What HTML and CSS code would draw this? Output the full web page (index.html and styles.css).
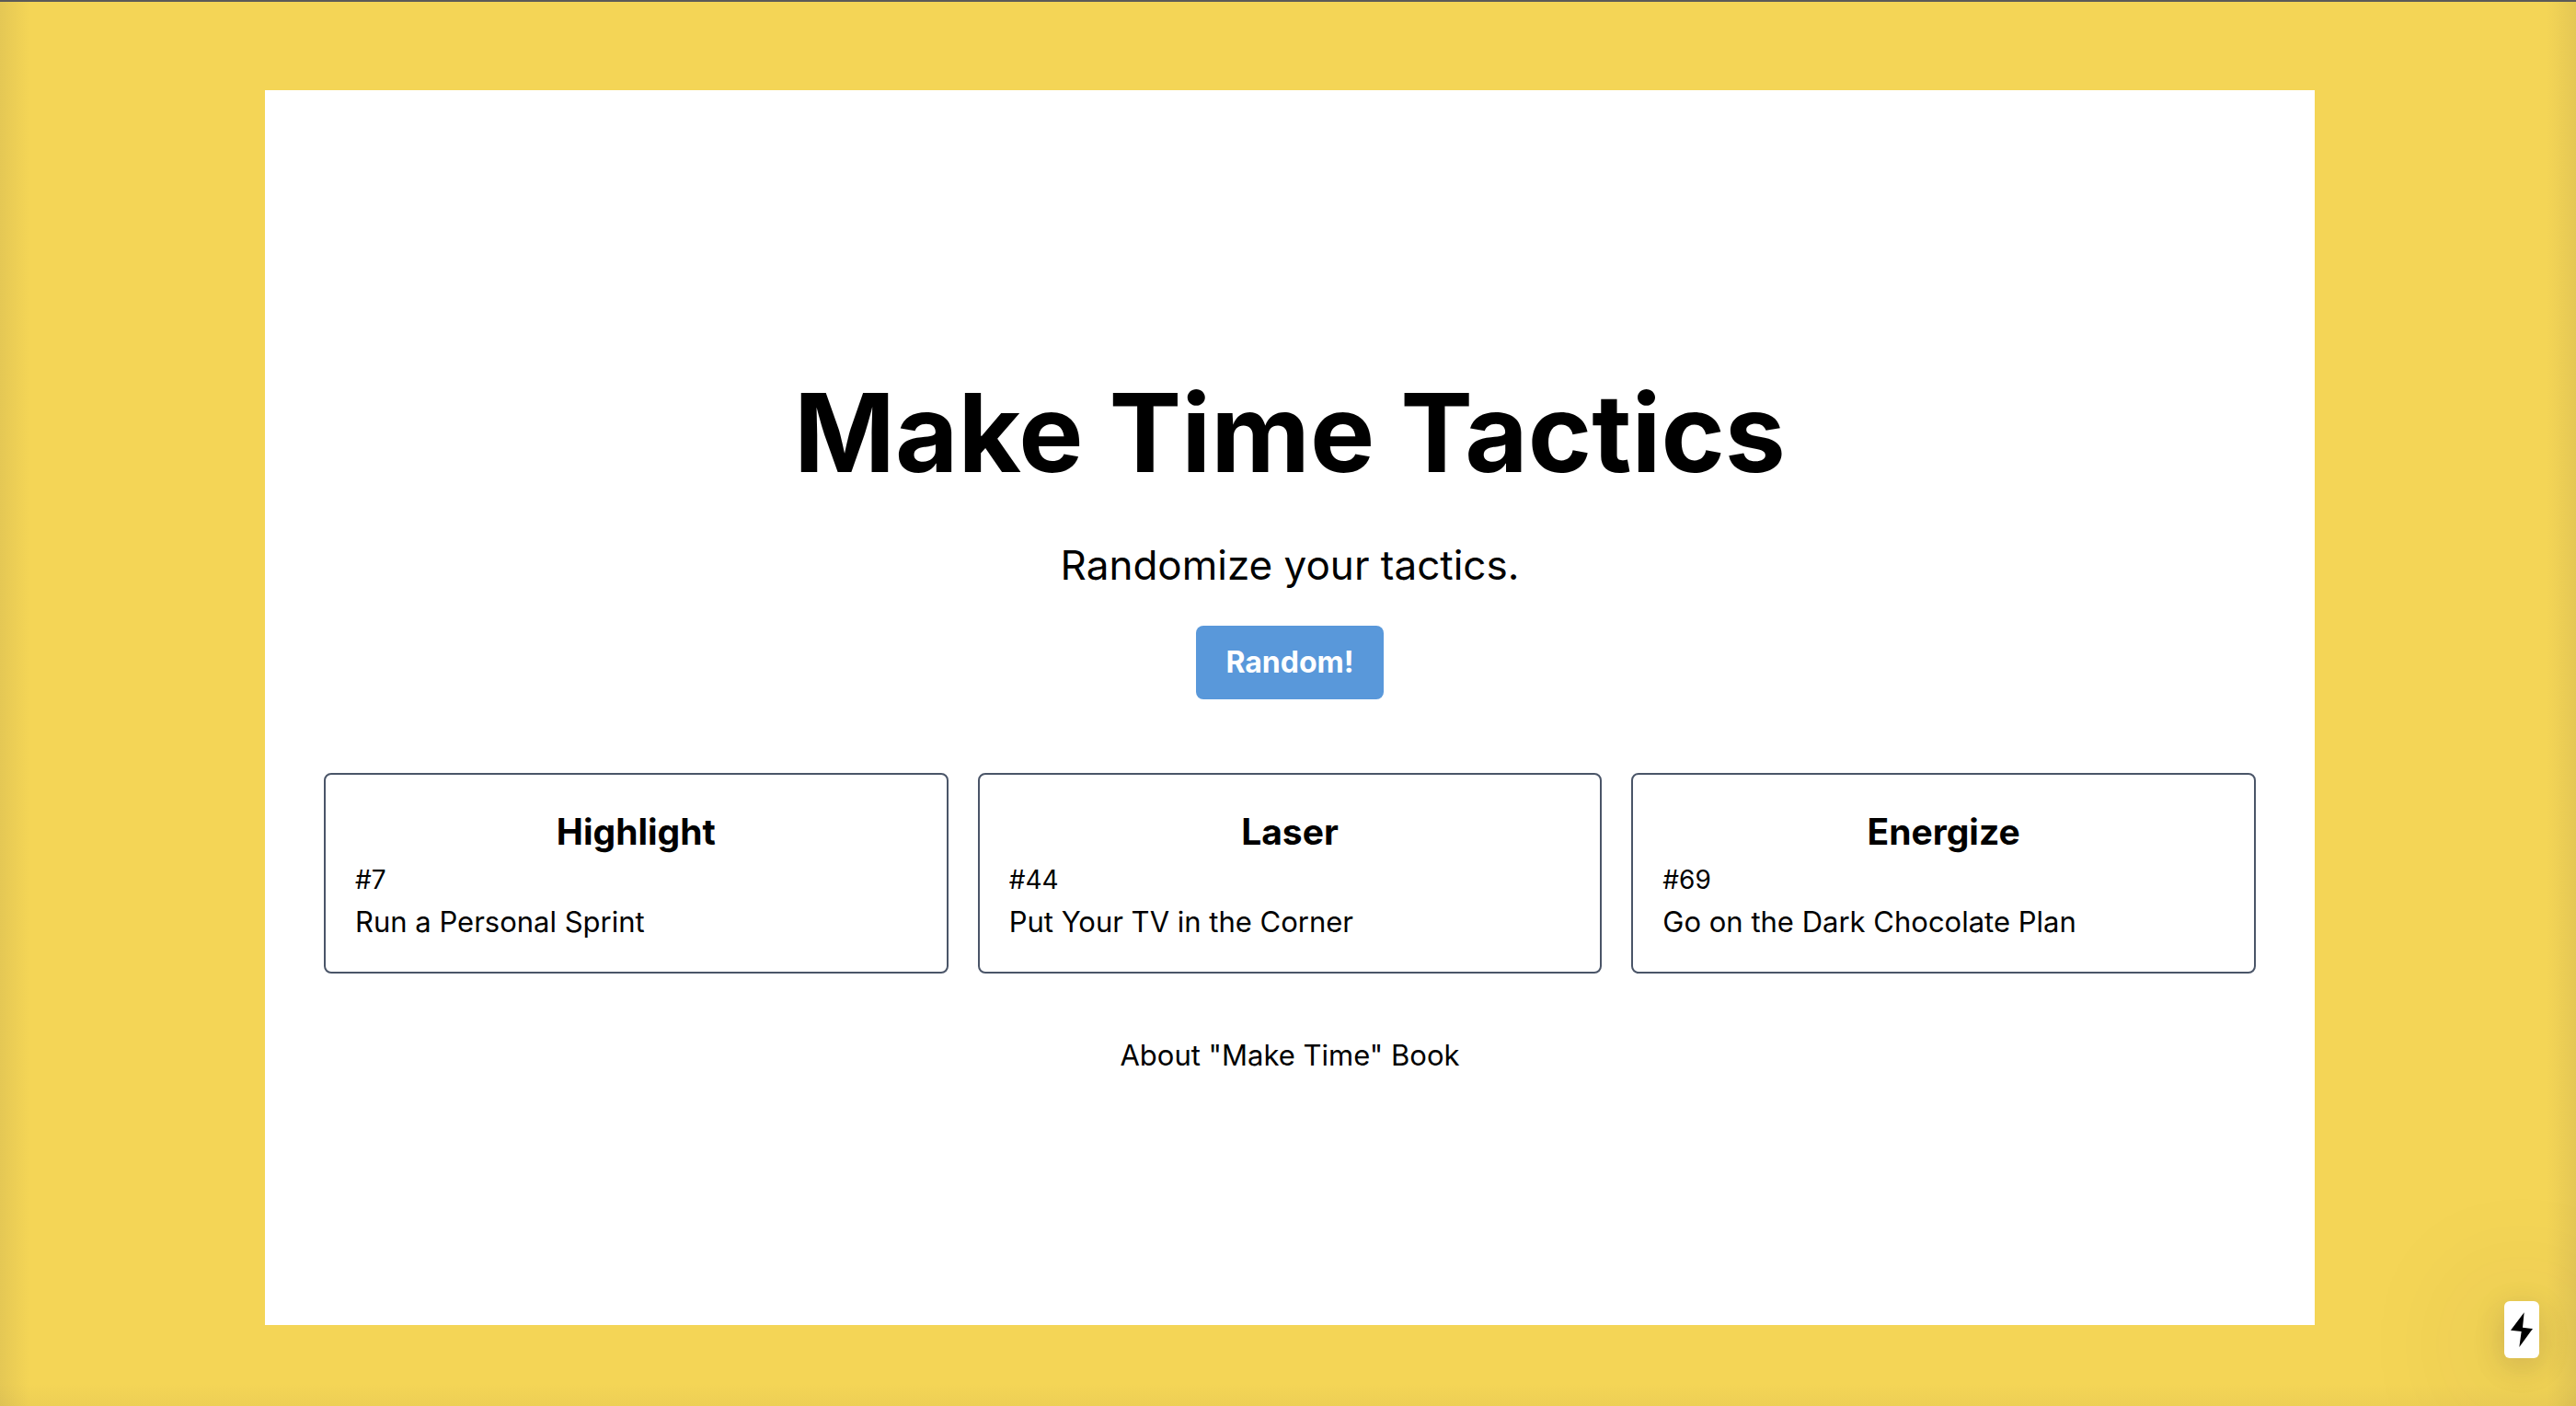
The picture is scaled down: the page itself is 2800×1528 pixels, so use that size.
FILE: index.html
```html
<!DOCTYPE html>
<html lang="en">
<head>
<meta charset="utf-8">
<meta name="viewport" content="width=device-width, initial-scale=1">
<title>Make Time Tactics</title>
<link rel="stylesheet" href="styles.css">
</head>
<body>
<div class="page">
  <main class="panel">
    <h1 class="title">Make Time Tactics</h1>
    <p class="subtitle">Randomize your tactics.</p>
    <button class="button" type="button">Random!</button>
    <div class="cards">
      <section class="card">
        <h2 class="card-heading">Highlight</h2>
        <p class="card-number">#7</p>
        <p class="card-tactic">Run a Personal Sprint</p>
      </section>
      <section class="card">
        <h2 class="card-heading">Laser</h2>
        <p class="card-number">#44</p>
        <p class="card-tactic">Put Your TV in the Corner</p>
      </section>
      <section class="card">
        <h2 class="card-heading">Energize</h2>
        <p class="card-number">#69</p>
        <p class="card-tactic">Go on the Dark Chocolate Plan</p>
      </section>
    </div>
    <a class="about" href="#about">About "Make Time" Book</a>
  </main>
</div>
<div class="indicator">
  <svg class="bolt" viewBox="0 0 72 114" aria-hidden="true"><path d="M44 1 0 59 35 63 28 114 72 54 39 50Z"/></svg>
</div>
</body>
</html>
```
FILE: styles.css
```css
*, *::before, *::after {
  box-sizing: border-box;
}

body {
  margin: 0;
  font-family: Inter, "Liberation Sans", sans-serif;
  font-size: 31px;
  line-height: 48px;
  color: #000;
}

h1, h2, p {
  margin: 0;
}

.page {
  display: flex;
  min-height: 100vh;
  padding: 96px 284px 88px 288px;
  border-top: 2px solid #5b5a58;
  background:
    linear-gradient(to right, rgba(70, 60, 70, 0.09), rgba(70, 60, 70, 0) 32px),
    linear-gradient(to left, rgba(70, 60, 70, 0.09), rgba(70, 60, 70, 0) 32px),
    linear-gradient(to top, rgba(70, 60, 70, 0.04), rgba(70, 60, 70, 0) 24px),
    #f4d556;
}

.panel {
  flex: 1;
  display: flex;
  flex-direction: column;
  align-items: center;
  justify-content: center;
  padding: 80px 64px 64px;
  background: #fff;
}

.title {
  font-size: 118px;
  line-height: 172px;
  font-weight: 700;
  text-align: center;
}

.subtitle {
  margin-top: 20px;
  font-size: 44px;
  line-height: 76px;
  text-align: center;
}

.button {
  margin-top: 28px;
  padding: 16px 32px;
  border: 0;
  border-radius: 8px;
  background: #5998da;
  color: #fff;
  font: inherit;
  font-size: 32px;
  font-weight: 700;
}

.cards {
  display: grid;
  grid-template-columns: repeat(3, 1fr);
  gap: 32px;
  align-self: stretch;
  margin-top: 80px;
}

.card {
  padding: 32px 32px 30px;
  border: 2px solid #4a5568;
  border-radius: 8px;
}

.card-heading {
  font-size: 39px;
  line-height: 60px;
  font-weight: 700;
  text-align: center;
}

.card-number {
  font-size: 28px;
  line-height: 44px;
}

.about {
  margin-top: 66px;
  line-height: 46px;
  color: inherit;
  text-decoration: none;
}

.indicator {
  position: fixed;
  right: 40px;
  bottom: 52px;
  display: flex;
  align-items: center;
  justify-content: center;
  width: 38px;
  height: 62px;
  border-radius: 6px;
  background: #fff;
  box-shadow: 0 8px 32px rgba(60, 50, 60, 0.18), 0 16px 140px 16px rgba(60, 50, 60, 0.18);
}

.bolt {
  width: 24px;
  height: 38px;
}
```
